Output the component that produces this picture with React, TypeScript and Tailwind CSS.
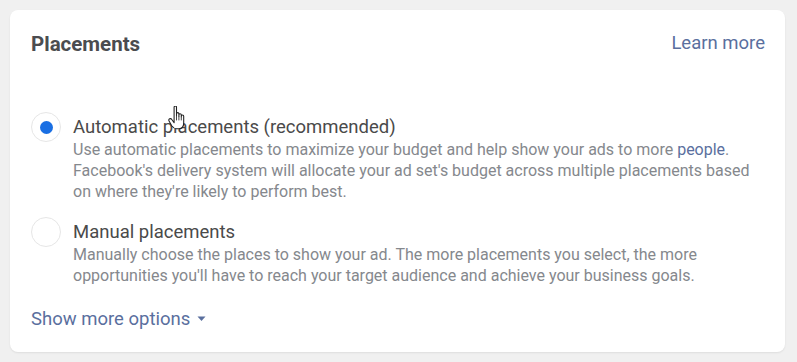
import React from "react";

function Cursor() {
  return (
    <svg
      className="absolute left-[168px] top-[106px]"
      width="17"
      height="24"
      viewBox="0 0 14 20"
    >
      <path
        d="M5,1 C5,0.4 5.5,0 6,0 C6.5,0 7,0.4 7,1 L7,8 L7,6.5 C7,6 7.5,5.5 8,5.5 C8.5,5.5 9,6 9,6.5 L9,8.5 L9,7.5 C9,7 9.5,6.5 10,6.5 C10.5,6.5 11,7 11,7.5 L11,9 L11,8.5 C11,8 11.5,7.5 12,7.5 C12.5,7.5 13,8 13,8.5 L13,14 C13,17 11.5,19 9,19 L7,19 C5,19 4,18 3,16.5 L0.8,12.5 C0.4,11.8 0.6,11 1.3,10.7 C2,10.4 2.7,10.7 3.1,11.3 L5,14 Z"
        fill="#ffffff"
        stroke="#222"
        strokeWidth="0.9"
        strokeLinejoin="round"
      />
      <path d="M7,8 L7,12 M9,8.5 L9,12 M11,9 L11,12" stroke="#222" strokeWidth="0.7" />
    </svg>
  );
}

function Radio({ checked }: { checked?: boolean }) {
  return (
    <div className="w-[30px] h-[30px] shrink-0 rounded-full border border-[#e6e6e6] bg-white flex items-center justify-center mt-[-4px]">
      {checked && <div className="w-[13px] h-[13px] rounded-full bg-[#1a6fe3]" />}
    </div>
  );
}

export default function App() {
  return (
    <div
      className="relative w-[797px] h-[362px] bg-[#f0f0f0] pt-[10px] pl-[10px] pr-[12px] pb-[10px]"
      style={{ fontFamily: "Roboto, 'Liberation Sans', sans-serif" }}
    >
      <div className="h-full bg-white rounded-lg shadow-[0_1px_2px_rgba(0,0,0,0.08)] pl-[21px] pr-[20px] pt-[22px]">
        <div className="flex items-center justify-between h-[24px]">
          <div className="text-[20.5px] font-bold text-[#4b4c4f]">Placements</div>
          <div className="text-[18.5px] text-[#5a6f9e]">Learn more</div>
        </div>

        <div className="mt-[60px] flex gap-[12px]">
          <Radio checked />
          <div>
            <div className="text-[18.5px] leading-[23px] text-[#4a4a4a]">
              Automatic placements (recommended)
            </div>
            <div className="text-[16px] leading-[21px] text-[#85888d]">
              Use automatic placements to maximize your budget and help show your ads to more{" "}
              <span className="text-[#5a6f9e]">people</span>.
              <br />
              Facebook's delivery system will allocate your ad set's budget across multiple placements based
              <br />
              on where they're likely to perform best.
            </div>
          </div>
        </div>

        <div className="mt-[19px] flex gap-[12px]">
          <Radio />
          <div>
            <div className="text-[18.5px] leading-[23px] text-[#4a4a4a]">Manual placements</div>
            <div className="text-[16px] leading-[21px] text-[#85888d]">
              Manually choose the places to show your ad. The more placements you select, the more
              <br />
              opportunities you'll have to reach your target audience and achieve your business goals.
            </div>
          </div>
        </div>

        <div className="mt-[22px] flex items-center gap-[7px] text-[18.5px] leading-[22px] text-[#5a6f9e]">
          <span>Show more options</span>
          <svg width="9" height="6" viewBox="0 0 9 6">
            <path d="M0.5 0.5 L8.5 0.5 L4.5 5 Z" fill="#5a6f9e" />
          </svg>
        </div>
      </div>
      <Cursor />
    </div>
  );
}
